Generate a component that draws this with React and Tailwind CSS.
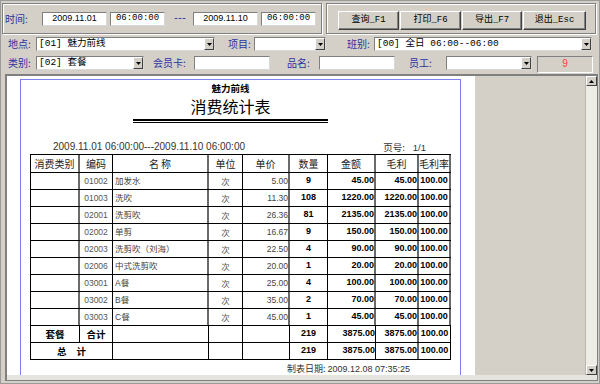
import React from "react";

const cjk = { fontFamily: '"Noto Sans CJK SC", "Liberation Sans", sans-serif' };
const sans = { fontFamily: '"Liberation Sans", "Noto Sans CJK SC", sans-serif' };
const mono = { fontFamily: '"Liberation Mono", "Noto Sans CJK SC", monospace' };

const rows = [
  ["01002", "加发水", "5.00", "9", "45.00", "45.00"],
  ["01003", "洗吹", "11.30", "108", "1220.00", "1220.00"],
  ["02001", "洗剪吹", "26.36", "81", "2135.00", "2135.00"],
  ["02002", "单剪", "16.67", "9", "150.00", "150.00"],
  ["02003", "洗剪吹（刘海）", "22.50", "4", "90.00", "90.00"],
  ["02006", "中式洗剪吹", "20.00", "1", "20.00", "20.00"],
  ["03001", "A餐", "25.00", "4", "100.00", "100.00"],
  ["03002", "B餐", "35.00", "2", "70.00", "70.00"],
  ["03003", "C餐", "45.00", "1", "45.00", "45.00"],
];

const Label = ({ w, children }) => (
  <div className={`${w} text-[10px] leading-[14px] text-[#3030a0] whitespace-nowrap`} style={cjk}>
    {children}
  </div>
);

const Field = ({ w, children, style }) => (
  <div
    className={`${w} h-[14px] bg-white border border-[#7f7f7f] border-b-[#d8d8d8] border-r-[#d8d8d8] flex items-center justify-center text-[9px] text-black`}
    style={style}
  >
    {children}
  </div>
);

const Arrow = ({ up }) => (
  <svg width="5" height="3" viewBox="0 0 5 3">
    <path d={up ? "M0 3 L2.5 0 L5 3 Z" : "M0 0 L5 0 L2.5 3 Z"} fill="#000" />
  </svg>
);

const Combo = ({ w, children }) => (
  <div className={`${w} h-[14px] bg-white border border-[#7f7f7f] border-b-[#d8d8d8] border-r-[#d8d8d8] flex items-center`}>
    <div className="flex-1 pl-[2px] text-[9.5px] leading-[12px] text-black whitespace-nowrap overflow-hidden" style={mono}>
      {children}
    </div>
    <div className="w-[10px] h-[12px] bg-[#d4d0c8] border border-t-white border-l-white border-r-[#404040] border-b-[#404040] flex items-center justify-center">
      <Arrow />
    </div>
  </div>
);

const Button = ({ w, children }) => (
  <div
    className={`${w} h-[19px] bg-[#d4d0c8] border border-t-white border-l-white border-r-[#404040] border-b-[#404040] shadow-[inset_-1px_-1px_0_#808080] flex items-center justify-center text-[9px] text-black`}
    style={mono}
  >
    {children}
  </div>
);

// column boxes: width incl. right border
const cols = [
  "w-[50px] border-l border-l-black border-r-2 border-r-[#6a6a6a]",
  "w-[33px] border-r border-r-black",
  "w-[96px] border-r-2 border-r-[#6a6a6a]",
  "w-[34px] border-r border-r-black",
  "w-[47px] border-r-2 border-r-[#6a6a6a]",
  "w-[38px] border-r border-r-black",
  "w-[48px] border-r-2 border-r-[#6a6a6a]",
  "w-[43px] border-r-2 border-r-[#6a6a6a]",
  "w-[32px] border-r-2 border-r-[#6a6a6a]",
];

const Num = ({ c, align, children }) => (
  <div className={`${c} h-full flex items-center ${align} text-[9px] font-bold text-black`} style={sans}>
    {children}
  </div>
);

export default function App() {
  return (
    <div className="w-[600px] h-[384px] bg-[#d4d0c8] border border-[#9a9a9a] flex flex-col overflow-hidden">
      {/* top group boxes */}
      <div className="mt-[2px] pl-[1px] h-[31px] flex">
        <div className="w-[320px] h-full border border-[#808080] shadow-[inset_1px_1px_0_#fff,1px_1px_0_#fff] flex items-center pl-[2px]">
          <Label w="w-[37px]">时间:</Label>
          <Field w="w-[65px]" style={sans}>2009.11.01</Field>
          <Field w="w-[55px] ml-[3px]" style={mono}>06:00:00</Field>
          <div className="w-[28px] text-center text-[10px] tracking-[-2px] text-[#3030a0]" style={mono}>---</div>
          <Field w="w-[65px]" style={sans}>2009.11.10</Field>
          <Field w="w-[55px] ml-[3px]" style={mono}>06:00:00</Field>
        </div>
        <div className="ml-[4px] w-[270px] h-full border border-[#808080] shadow-[inset_1px_1px_0_#fff,1px_1px_0_#fff] flex items-start pt-[7px] pl-[11px] gap-[1px]">
          <Button w="w-[61px]">查询_F1</Button>
          <Button w="w-[61px]">打印_F6</Button>
          <Button w="w-[60px]">导出_F7</Button>
          <Button w="w-[63px]">退出_Esc</Button>
        </div>
      </div>

      {/* row 2 */}
      <div className="mt-[3px] h-[14px] pl-[7px] flex items-center">
        <Label w="w-[28px]">地点:</Label>
        <Combo w="w-[179px]">[01] 魅力前线</Combo>
        <Label w="w-[26px] ml-[13px]">项目:</Label>
        <Combo w="w-[72px]"></Combo>
        <Label w="w-[27px] ml-[21px]">班别:</Label>
        <Combo w="w-[218px]">[00] 全日 06:00--06:00</Combo>
      </div>

      {/* row 3 */}
      <div className="mt-[5px] h-[17px] pl-[7px] flex items-start">
        <Label w="w-[28px]">类别:</Label>
        <Combo w="w-[108px]">[02] 套餐</Combo>
        <Label w="w-[41px] ml-[9px]">会员卡:</Label>
        <Field w="w-[76px]"></Field>
        <Label w="w-[32px] ml-[17px]">品名:</Label>
        <Field w="w-[76px]"></Field>
        <Label w="w-[37px] ml-[14px]">员工:</Label>
        <Combo w="w-[86px]"></Combo>
        <div className="ml-[5px] w-[56px] h-[17px] bg-[#d4d0c8] border border-t-[#808080] border-l-[#808080] border-r-white border-b-white flex justify-center pt-[1px] text-[10px] leading-[12px] text-[#ff3a3a]" style={sans}>
          9
        </div>
      </div>

      {/* main preview */}
      <div className="mt-[1px] ml-[4px] w-[593px] h-[307px] border-l-2 border-t-2 border-r border-b border-[#808080] flex flex-col">
        <div className="flex-1 flex overflow-hidden">
          <div className="w-[468px] h-full bg-white pl-[13px] pt-[3px] overflow-hidden">
            <div className="w-[441px] h-[400px] border-l border-t border-r border-[#7f7ff2]">
              <div className="ml-[112px] w-[195px]">
                <div className="mt-[2px] h-[12px] leading-[12px] text-[9.5px] font-bold text-center text-black" style={cjk}>
                  魅力前线
                </div>
                <div className="mt-[3px] h-[19px] leading-[19px] text-[16px] text-center text-black" style={cjk}>
                  消费统计表
                </div>
                <div className="mt-[3px] h-[2px] bg-black" />
                <div className="mt-[1px] h-[1px] bg-black" />
              </div>

              <div className="mt-[19px] ml-[9px] w-[421px] h-[10px] flex justify-between pl-[23px] pr-[25px] leading-[10px] text-[#333]">
                <span className="text-[10px]" style={sans}>2009.11.01 06:00:00---2009.11.10 06:00:00</span>
                <span className="text-[9.5px]" style={cjk}>
                  页号:<span className="ml-[8px]" style={sans}>1/1</span>
                </span>
              </div>

              <div className="mt-[2px] ml-[9px] w-[421px] border-t border-black">
                <div className="h-[18px] flex border-b border-black text-[10px] text-[#222]" style={cjk}>
                  {["消费类别", "编码", "名 称", "单位", "单价", "数量", "金额", "毛利", "毛利率"].map((h, i) => (
                    <div key={i} className={`${cols[i]} h-full flex items-center justify-center whitespace-nowrap`}>
                      {h}
                    </div>
                  ))}
                </div>
                {rows.map((r, i) => (
                  <div key={i} className="h-[17px] flex border-b border-black">
                    <div className={`${cols[0]} h-full`} />
                    <div className={`${cols[1]} h-full flex items-center justify-center text-[8.5px] text-[#555]`} style={sans}>
                      {r[0]}
                    </div>
                    <div className={`${cols[2]} h-full flex items-center pl-[2px] text-[8.5px] text-[#444] whitespace-nowrap`} style={sans}>
                      {r[1]}
                    </div>
                    <div className={`${cols[3]} h-full flex items-center justify-center text-[8.5px] text-[#555]`} style={cjk}>
                      次
                    </div>
                    <div className={`${cols[4]} h-full flex items-center justify-end text-[8.5px] text-[#444]`} style={sans}>
                      {r[2]}
                    </div>
                    <Num c={cols[5]} align="justify-center">{r[3]}</Num>
                    <Num c={cols[6]} align="justify-end">{r[4]}</Num>
                    <Num c={cols[7]} align="justify-end">{r[5]}</Num>
                    <Num c={cols[8]} align="justify-center">100.00</Num>
                  </div>
                ))}
                <div className="h-[17px] flex border-b border-black">
                  <div className="w-[50px] border-l border-l-black border-r border-r-black h-full flex items-center justify-center text-[9.5px] font-bold text-black" style={cjk}>
                    套餐
                  </div>
                  <div className={`${cols[1]} h-full flex items-center justify-center text-[9.5px] font-bold text-black`} style={cjk}>
                    合计
                  </div>
                  <div className="w-[96px] border-r border-r-black h-full" />
                  <div className={`${cols[3]} h-full`} />
                  <div className="w-[47px] border-r border-r-black h-full" />
                  <Num c={cols[5]} align="justify-center">219</Num>
                  <Num c="w-[48px] border-r border-r-black" align="justify-end">3875.00</Num>
                  <Num c={cols[7]} align="justify-end">3875.00</Num>
                  <Num c="w-[32px] border-r border-r-black" align="justify-center">100.00</Num>
                </div>
                <div className="h-[17px] flex border-b border-black">
                  <div className="w-[83px] border-l border-l-black border-r border-r-black h-full flex items-center justify-center text-[9.5px] font-bold text-black" style={cjk}>
                    总<span className="ml-[10px]">计</span>
                  </div>
                  <div className="w-[96px] border-r border-r-black h-full" />
                  <div className={`${cols[3]} h-full`} />
                  <div className="w-[47px] border-r border-r-black h-full" />
                  <Num c={cols[5]} align="justify-center">219</Num>
                  <Num c="w-[48px] border-r border-r-black" align="justify-end">3875.00</Num>
                  <Num c={cols[7]} align="justify-end">3875.00</Num>
                  <Num c="w-[32px] border-r border-r-black" align="justify-center">100.00</Num>
                </div>
              </div>

              <div className="mt-[4px] ml-[266px] h-[10px] leading-[10px] text-[9px] text-[#333] whitespace-nowrap" style={cjk}>
                制表日期: <span style={sans}>2009.12.08 07:35:25</span>
              </div>
            </div>
          </div>

          <div className="w-[110px] h-full bg-[#d4d0c8]" />

          <div className="w-[12px] h-full bg-[#edece6] border-l border-[#b8b5ad] flex flex-col">
            <div className="h-[10px] bg-[#d4d0c8] border border-t-white border-l-white border-r-[#404040] border-b-[#404040] flex items-center justify-center">
              <Arrow up />
            </div>
            <div className="flex-1" />
            <div className="h-[10px] bg-[#d4d0c8] border border-t-white border-l-white border-r-[#404040] border-b-[#404040] flex items-center justify-center">
              <Arrow />
            </div>
          </div>
        </div>
        <div className="h-[5px] bg-[#e6e4de]" />
      </div>
    </div>
  );
}
